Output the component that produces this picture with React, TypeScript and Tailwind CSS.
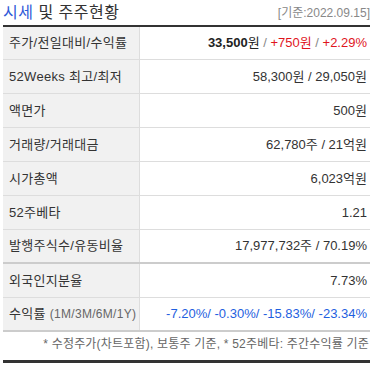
import React from "react";

type Row = {
  label: React.ReactNode;
  value: React.ReactNode;
  strong?: boolean; // thicker gray line under the row
};

const font = "font-['Liberation_Sans','Noto_Sans_CJK_KR',sans-serif]";

const rows: Row[] = [
  {
    label: "주가/전일대비/수익률",
    value: (
      <span className="whitespace-pre">
        <span className="font-bold text-[#222]">33,500</span>
        <span className="text-[#222]">원</span>
        <span className="text-[#888]">{" / "}</span>
        <span className="text-[#e0151d]">+750원</span>
        <span className="text-[#888]">{" / "}</span>
        <span className="text-[#e0151d]">+2.29%</span>
      </span>
    ),
  },
  { label: "52Weeks 최고/최저", value: "58,300원 / 29,050원" },
  { label: "액면가", value: "500원" },
  { label: "거래량/거래대금", value: "62,780주 / 21억원" },
  { label: "시가총액", value: "6,023억원" },
  { label: "52주베타", value: "1.21" },
  { label: "발행주식수/유동비율", value: "17,977,732주 / 70.19%", strong: true },
  { label: "외국인지분율", value: "7.73%" },
  {
    label: (
      <span>
        수익률 <span className="text-[12px] text-[#666]">(1M/3M/6M/1Y)</span>
      </span>
    ),
    value: (
      <span className="text-[#1f5fe0]">-7.20%/ -0.30%/ -15.83%/ -23.34%</span>
    ),
    strong: true,
  },
];

const App = () => {
  return (
    <div className={`w-[373px] h-[366px] bg-white text-[#333] ${font}`}>
      {/* Header */}
      <div className="flex justify-between items-center h-[25px] px-[3px]">
        <h2 className="text-[16px] leading-none tracking-[0.5px]">
          <span className="text-[#2f5ad8]">시세</span> 및 주주현황
        </h2>
        <span className="text-[12px] text-[#888]">[기준:2022.09.15]</span>
      </div>

      {/* Table */}
      <div className="mx-[3px] border-t-2 border-[#333]">
        {rows.map((row, i) => (
          <div
            key={i}
            className={`flex ${i === 0 ? "h-[33px]" : "h-[34px]"} ${
              row.strong ? "border-b-2 border-[#ccc]" : "border-b border-[#ddd]"
            }`}
          >
            <div className="w-[137px] shrink-0 bg-[#f1f1f1] border-r border-[#ddd] flex items-center pl-[6px] text-[13px] tracking-[0.3px]">
              {row.label}
            </div>
            <div className="flex-1 flex items-center justify-end pr-[3px] text-[13px]">
              {row.value}
            </div>
          </div>
        ))}
      </div>

      {/* Footnote */}
      <div className="mx-[3px] h-[28px] pt-[3px] flex items-start justify-end pr-[1px] text-[12px] text-[#666] tracking-[0.2px]">
        * 수정주가(차트포함), 보통주 기준, * 52주베타: 주간수익률 기준
      </div>
      <div className="mx-[3px] h-[3px] bg-[#333]" />
    </div>
  );
};

export default App;
